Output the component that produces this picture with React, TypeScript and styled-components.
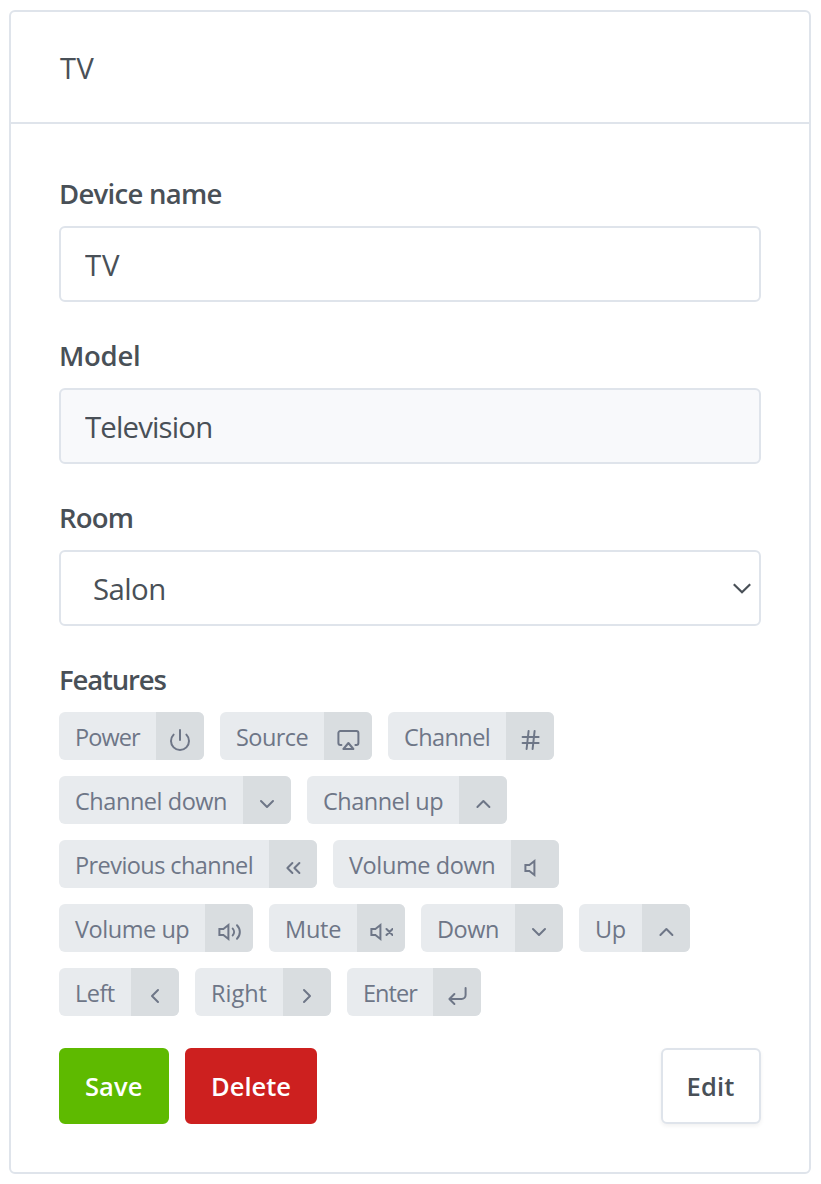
import type { ReactNode } from "react";
import styled, { createGlobalStyle } from "styled-components";

const border = "#dfe4eb";
const text = "#495057";

const GlobalStyle = createGlobalStyle`
  *, *::before, *::after { box-sizing: border-box; }
  body {
    margin: 0;
    background: #fff;
    color: ${text};
    font-family: "Segoe UI", "Open Sans", "Noto Sans", sans-serif;
  }
`;

const Page = styled.main`
  padding: 10px 10px 10px 9px;
`;

const Card = styled.section`
  border: 2px solid ${border};
  border-radius: 6px;
  background: #fff;
`;

const CardHeader = styled.header`
  display: flex;
  align-items: center;
  height: 112px;
  padding: 1px 48px 0 49px;
  border-bottom: 2px solid ${border};
`;

const CardTitle = styled.h3`
  margin: 0;
  font-size: 29px;
  font-weight: 400;
  line-height: 42px;
  letter-spacing: 0.6px;
`;

const CardBody = styled.form`
  padding: 48px;
`;

const FormGroup = styled.div`
  display: flex;
  flex-direction: column;
  margin-bottom: 32px;
`;

const Label = styled.label<{ $spacing: number }>`
  display: block;
  margin-bottom: 11px;
  padding-top: 1px;
  font-size: 27.5px;
  font-weight: 600;
  line-height: 42px;
  letter-spacing: ${(p) => p.$spacing}px;
`;

const Input = styled.input<{ $spacing?: number }>`
  width: 100%;
  height: 76px;
  padding: 2px 24px 0;
  border: 2px solid ${border};
  border-radius: 6px;
  background: ${(p) => (p.disabled ? "#f8f9fb" : "#fff")};
  color: ${text};
  font: inherit;
  font-size: 29.4px;
  letter-spacing: ${(p) => p.$spacing ?? 0}px;
  outline: none;
`;

const SelectBox = styled.div`
  display: grid;
  align-items: center;
  > * { grid-area: 1 / 1; }
  > svg { justify-self: end; margin-right: 9px; pointer-events: none; }
`;

const Select = styled.select`
  width: 100%;
  height: 76px;
  padding: 2px 32px 0;
  border: 2px solid ${border};
  border-radius: 6px;
  background: #fff;
  color: ${text};
  font: inherit;
  font-size: 29.4px;
  letter-spacing: -0.6px;
  appearance: none;
  outline: none;
`;

const Tags = styled.div`
  display: flex;
  flex-wrap: wrap;
  gap: 16px;
`;

const Tag = styled.span`
  display: flex;
  height: 48px;
  border-radius: 6px;
  overflow: hidden;
  background: #e8ebee;
  color: #6e7687;
`;

const TagText = styled.span<{ $width: number; $spacing: number }>`
  width: ${(p) => p.$width}px;
  padding-left: 16px;
  font-size: 23.5px;
  line-height: 51px;
  letter-spacing: ${(p) => p.$spacing}px;
  white-space: nowrap;
`;

const TagAddon = styled.span`
  display: flex;
  align-items: center;
  justify-content: center;
  width: 48px;
  padding-top: 8px;
  background: #d9dde0;
`;

const Actions = styled.footer`
  display: flex;
  gap: 16px;
`;

const Button = styled.button<{ $color: string; $width: number; $spacing: number }>`
  width: ${(p) => p.$width}px;
  height: 76px;
  padding: 0 0 0 24px;
  border: 2px solid ${(p) => p.$color};
  border-radius: 6px;
  background: ${(p) => p.$color};
  color: #fff;
  font: inherit;
  font-size: 25.5px;
  font-weight: 600;
  letter-spacing: ${(p) => p.$spacing}px;
  text-align: left;
  cursor: pointer;
`;

const EditButton = styled(Button)`
  margin-left: auto;
  padding-left: 23.5px;
  border-color: ${border};
  color: ${text};
  box-shadow: 0 2px 4px rgba(0, 0, 0, 0.06);
`;

const Icon = ({ children }: { children: ReactNode }) => (
  <svg
    width="24"
    height="24"
    viewBox="0 0 24 24"
    fill="none"
    stroke="currentColor"
    strokeWidth="2"
    strokeLinecap="round"
    strokeLinejoin="round"
  >
    {children}
  </svg>
);

const speaker = <path d="M11.4 5 6.4 9h-4v6h4l5 4z" strokeLinejoin="miter" />;

const icons = {
  power: <path d="M18.36 6.64a9 9 0 1 1-12.73 0M12 2v10" />,
  airplay: (
    <>
      <path d="M5.4 17h-1a2 2 0 0 1-2-2V5a2 2 0 0 1 2-2h16a2 2 0 0 1 2 2v10a2 2 0 0 1-2 2h-1" />
      <path d="m12.4 15 5 6h-10z" />
    </>
  ),
  hash: <path d="M4.6 9h16M4.6 15h16M10.6 3l-2 18M16.6 3l-2 18" />,
  down: <path d="m6 9 6 6 6-6" />,
  up: <path d="m18.4 15-6-6-6 6" />,
  left: <path d="m15 18-6-6 6-6" />,
  right: <path d="m9 18 6-6-6-6" />,
  rewind: <path d="m11.4 17-5-5 5-5M18.4 17l-5-5 5-5" />,
  volume: speaker,
  volumeUp: (
    <>
      {speaker}
      <path d="M15.7 8.6a5 5 0 0 1 0 6.8M20 5.2a9.6 9.6 0 0 1 0 13.6" />
    </>
  ),
  mute: (
    <>
      {speaker}
      <path d="m23.5 9-6 6M17.5 9l6 6" />
    </>
  ),
  enter: <path d="m9.4 10-5 5 5 5M20.6 4v7a4 4 0 0 1-4 4H4.4" />,
};

type Feature = { name: string; icon: keyof typeof icons; width: number; spacing: number };

const features: Feature[] = [
  { name: "Power", icon: "power", width: 97, spacing: -0.9 },
  { name: "Source", icon: "airplay", width: 104, spacing: -0.55 },
  { name: "Channel", icon: "hash", width: 118, spacing: -0.58 },
  { name: "Channel down", icon: "down", width: 184, spacing: -0.45 },
  { name: "Channel up", icon: "up", width: 152, spacing: -0.5 },
  { name: "Previous channel", icon: "rewind", width: 210, spacing: -0.57 },
  { name: "Volume down", icon: "volume", width: 178, spacing: -0.4 },
  { name: "Volume up", icon: "volumeUp", width: 146, spacing: -0.45 },
  { name: "Mute", icon: "mute", width: 88, spacing: -0.25 },
  { name: "Down", icon: "down", width: 94, spacing: -0.45 },
  { name: "Up", icon: "up", width: 63, spacing: -0.3 },
  { name: "Left", icon: "left", width: 72, spacing: -0.5 },
  { name: "Right", icon: "right", width: 88, spacing: 0 },
  { name: "Enter", icon: "enter", width: 86, spacing: -0.95 },
];

export default function App() {
  return (
    <Page>
      <GlobalStyle />
      <Card>
        <CardHeader>
          <CardTitle>TV</CardTitle>
        </CardHeader>
        <CardBody>
          <FormGroup>
            <Label $spacing={-0.72}>Device name</Label>
            <Input defaultValue="TV" $spacing={0.8} />
          </FormGroup>
          <FormGroup>
            <Label $spacing={-0.25}>Model</Label>
            <Input defaultValue="Television" $spacing={-0.85} disabled />
          </FormGroup>
          <FormGroup>
            <Label $spacing={-0.8}>Room</Label>
            <SelectBox>
              <Select defaultValue="Salon">
                <option>Salon</option>
              </Select>
              <svg width="20" height="12" viewBox="0 0 20 12" fill="none" stroke="#495057" strokeWidth="2.2">
                <path d="m1.8 2.2 8.2 8 8.2-8" />
              </svg>
            </SelectBox>
          </FormGroup>
          <FormGroup>
            <Label $spacing={-1.15}>Features</Label>
            <Tags>
              {features.map((f) => (
                <Tag key={f.name}>
                  <TagText $width={f.width} $spacing={f.spacing}>{f.name}</TagText>
                  <TagAddon>
                    <Icon>{icons[f.icon]}</Icon>
                  </TagAddon>
                </Tag>
              ))}
            </Tags>
          </FormGroup>
          <Actions>
            <Button type="button" $color="#5eba00" $width={110} $spacing={0.1}>Save</Button>
            <Button type="button" $color="#cd201f" $width={132} $spacing={0}>Delete</Button>
            <EditButton type="button" $color="#fff" $width={100} $spacing={0.2}>Edit</EditButton>
          </Actions>
        </CardBody>
      </Card>
    </Page>
  );
}
